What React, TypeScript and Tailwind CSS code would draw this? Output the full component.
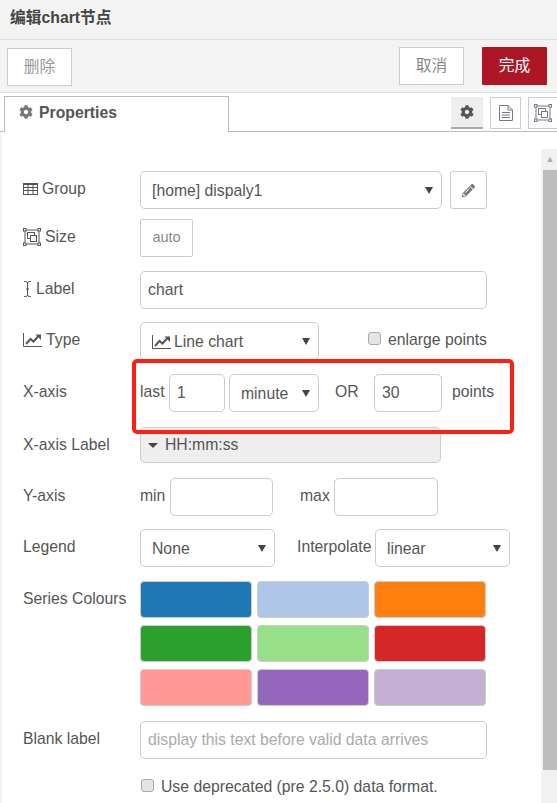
import type { ReactNode } from 'react';
import { FaCog, FaPencilAlt } from 'react-icons/fa';

const swatches = ['bg-[#1f77b4]', 'bg-[#aec7e8]', 'bg-[#ff7f0e]', 'bg-[#2ca02c]', 'bg-[#98df8a]', 'bg-[#d62728]', 'bg-[#ff9896]', 'bg-[#9467bd]', 'bg-[#c5b0d5]'];

function TableIcon() {
  return (
    <svg width="15" height="12" viewBox="0 0 15 12" fill="none" stroke="currentColor" strokeWidth="1" className="shrink-0">
      <rect x="0.5" y="0.5" width="14" height="11" />
      <path d="M0 1.5h15M0 4.5h15M0 7.5h15M5 2v10M10 2v10" />
    </svg>
  );
}

function ResizeIcon({ className }: { className?: string }) {
  return (
    <svg width="18" height="18" viewBox="0 0 18 18" fill="none" stroke="currentColor" strokeWidth="1" className={`shrink-0 ${className ?? ''}`}>
      <path d="M3 2h12M3 16h12M2 3v12M16 3v12" />
      <rect x="0.5" y="0.5" width="2.5" height="2.5" fill="white" />
      <rect x="15" y="0.5" width="2.5" height="2.5" fill="white" />
      <rect x="0.5" y="15" width="2.5" height="2.5" fill="white" />
      <rect x="15" y="15" width="2.5" height="2.5" fill="white" />
      <rect x="4.5" y="4.5" width="7" height="6" />
      <rect x="7.5" y="7.5" width="6" height="6" fill="white" />
    </svg>
  );
}

function CursorIcon() {
  return (
    <svg width="9" height="16" viewBox="0 0 9 16" fill="none" stroke="currentColor" strokeWidth="1" className="shrink-0">
      <path d="M1 0.5h1.5q2 0 2 1.5v12q0 1.5-2 1.5H1M8 0.5H6.5q-2 0-2 1.5M8 15.5H6.5q-2 0-2-1.5M3 8h3" />
    </svg>
  );
}

function ChartIcon() {
  return (
    <svg width="19" height="14" viewBox="0 0 19 14" className="shrink-0">
      <path d="M0.5 0v13.5H19" fill="none" stroke="currentColor" strokeWidth="1" />
      <path d="M3 11l4.5-5 3 2.5L15 3.5" fill="none" stroke="currentColor" strokeWidth="2" />
      <path d="M12.5 1.5H18V7z" fill="currentColor" />
    </svg>
  );
}

function FileIcon() {
  return (
    <svg width="14" height="16" viewBox="0 0 14 16" fill="none" stroke="currentColor" strokeWidth="1">
      <path d="M0.5 0.5h8.5l4.5 4.5v10.5H0.5zM9 0.5V5h4.5" />
      <path d="M3 7.5h8M3 10h8M3 12.5h8" />
    </svg>
  );
}

function Caret() {
  return <span className="h-0 w-0 shrink-0 border-x-[4px] border-t-[7px] border-x-transparent border-t-[#444]" />;
}

function Select({ width, children }: { width: string; children: ReactNode }) {
  return (
    <div className={`${width} flex h-[38px] shrink-0 items-center justify-between rounded-[5px] border border-[#ccc] bg-white pr-[8px] pl-[11px]`}>
      <span className="flex items-center gap-[3px] whitespace-nowrap pt-[1px]">{children}</span>
      <Caret />
    </div>
  );
}

function Input({ width, value, placeholder }: { width: string; value?: string; placeholder?: string }) {
  return (
    <input
      readOnly
      defaultValue={value}
      placeholder={placeholder}
      className={`${width} h-[38px] shrink-0 rounded-[5px] border border-[#ccc] bg-white px-[7px] text-[#555] outline-none placeholder:text-[#aaa]`}
    />
  );
}

function Row({ label, icon, top, children }: { label: string; icon?: ReactNode; top: string; children: ReactNode }) {
  return (
    <div className={`${top} flex items-start`}>
      <div className="flex h-[36px] w-[117px] shrink-0 items-center gap-[4px] whitespace-nowrap">
        {icon}
        {label}
      </div>
      {children}
    </div>
  );
}

function Checkbox() {
  return <span className="mb-[3px] inline-block h-[13px] w-[13px] shrink-0 rounded-[3px] border border-[#aaa] bg-[#e4e4e4]" />;
}

export default function App() {
  return (
    <div className="relative h-[803px] w-[557px] overflow-hidden bg-white font-['Liberation_Sans','Noto_Sans_CJK_SC',sans-serif] text-[15.75px] text-[#555]">
      {/* 标题 */}
      <div className="flex h-[40px] items-center border-b border-[#ddd] bg-[#f3f3f3] pb-[3px] pl-[10px] font-bold text-[#444]">编辑chart节点</div>

      {/* 按钮 */}
      <div className="flex h-[53px] items-center justify-between border-b border-[#ddd] bg-[#f3f3f3] pr-[10px] pl-[7px]">
        <button className="mt-[2px] h-[38px] w-[65px] border border-[#ccc] bg-white text-[#999]">删除</button>
        <div className="flex gap-[18px]">
          <button className="h-[38px] w-[65px] border border-[#ccc] bg-white text-[#888]">取消</button>
          <button className="h-[38px] w-[65px] rounded-[1px] bg-[#ad1625] text-white">完成</button>
        </div>
      </div>

      {/* tabs */}
      <div className="flex h-[39px] items-end justify-between border-b border-[#bbb] pl-[4px]">
        <div className="mb-[-1px] flex h-[36px] w-[225px] items-start gap-[6px] border-x border-t border-[#bbb] bg-white pt-[4px] pl-[14px] font-bold text-[#555]">
          <FaCog className="mt-[4px] text-[14px] text-[#777]" />
          Properties
        </div>
        <div className="mb-[2px] flex gap-[7px]">
          <div className="flex h-[32px] w-[32px] items-center justify-center border-b-2 border-[#aaa] bg-[#eee] text-[#555]"><FaCog className="text-[14px]" /></div>
          <div className="flex h-[32px] w-[31px] items-center justify-center border border-[#ccc] text-[#778]"><FileIcon /></div>
          <div className="mr-[-1px] flex h-[32px] w-[30px] items-center justify-center border border-[#ccc] text-[#778]"><ResizeIcon /></div>
        </div>
      </div>

      {/* scrollbar */}
      <div className="absolute top-[149px] right-0 bottom-0 w-[16px] bg-[#f1f1f1]">
        <div className="flex h-[21px] items-center justify-center pl-[2px] text-[9px] leading-none text-[#aaa]">▲</div>
        <div className="ml-[2px] h-[600px] bg-[#bdbdbd]" />
      </div>
      <div className="absolute top-[132px] bottom-0 left-0 w-[3px] bg-gradient-to-r from-[#eee] to-white" />

      {/* form */}
      <div className="pl-[23px]">
        <Row label="Group" icon={<TableIcon />} top="mt-[39px]">
          <Select width="w-[302px]">[home] dispaly1</Select>
          <div className="ml-[8px] flex h-[38px] w-[37px] items-center justify-center rounded-[3px] border border-[#ccc] text-[#777]"><FaPencilAlt className="text-[13px]" /></div>
        </Row>
        <Row label="Size" icon={<ResizeIcon />} top="mt-[10px]">
          <div className="flex h-[38px] w-[53px] items-center justify-center rounded-[2px] border border-[#ccc] text-[14.5px] text-[#888]">auto</div>
        </Row>
        <Row label="Label" icon={<CursorIcon />} top="mt-[14px]">
          <Input width="w-[347px]" value="chart" />
        </Row>
        <Row label="Type" icon={<ChartIcon />} top="mt-[13px]">
          <Select width="w-[179px]"><ChartIcon />Line chart</Select>
          <label className="ml-[49px] flex h-[36px] items-center gap-[7px]"><Checkbox />enlarge points</label>
        </Row>
        <Row label="X-axis" top="mt-[14px]">
          <div className="flex items-start">
            <span className="flex h-[36px] w-[29px] items-center">last</span>
            <Input width="w-[56px]" value="1" />
            <div className="ml-[4px]"><Select width="w-[90px]">minute</Select></div>
            <span className="ml-[16px] flex h-[36px] w-[39px] items-center">OR</span>
            <Input width="w-[68px]" value="30" />
            <span className="ml-[10px] flex h-[36px] items-center">points</span>
          </div>
        </Row>
        <Row label="X-axis Label" top="mt-[15px]">
          <div className="flex h-[36px] w-[301px] items-center gap-[7px] rounded-[5px] border border-[#ccc] bg-[#eee] pl-[7px]">
            <span className="h-0 w-0 border-x-[5px] border-t-[5px] border-x-transparent border-t-[#444]" />
            HH:mm:ss
          </div>
        </Row>
        <Row label="Y-axis" top="mt-[15px]">
          <span className="flex h-[36px] w-[30px] items-center">min</span>
          <Input width="w-[103px]" />
          <span className="ml-[27px] flex h-[36px] w-[34px] items-center">max</span>
          <Input width="w-[104px]" />
        </Row>
        <Row label="Legend" top="mt-[13px]">
          <Select width="w-[135px]">None</Select>
          <span className="ml-[22px] flex h-[36px] w-[78px] items-center whitespace-nowrap">Interpolate</span>
          <Select width="w-[135px]">linear</Select>
        </Row>
        <Row label="Series Colours" top="mt-[14px]">
          <div className="grid w-[346px] grid-cols-3 gap-x-[5px] gap-y-[7px]">
            {swatches.map((c) => (
              <div key={c} className={`${c} h-[37px] rounded-[4px] border border-[#ccc]`} />
            ))}
          </div>
        </Row>
        <Row label="Blank label" top="mt-[15px]">
          <Input width="w-[347px]" placeholder="display this text before valid data arrives" />
        </Row>
        <div className="mt-[16px] ml-[118px] flex items-center gap-[7px] whitespace-nowrap">
          <Checkbox />
          Use deprecated (pre 2.5.0) data format.
        </div>
      </div>

      <div className="absolute top-[359px] left-[132px] h-[75px] w-[382px] rounded-[5px] border-[4px] border-[#ff1e14]" />
    </div>
  );
}
